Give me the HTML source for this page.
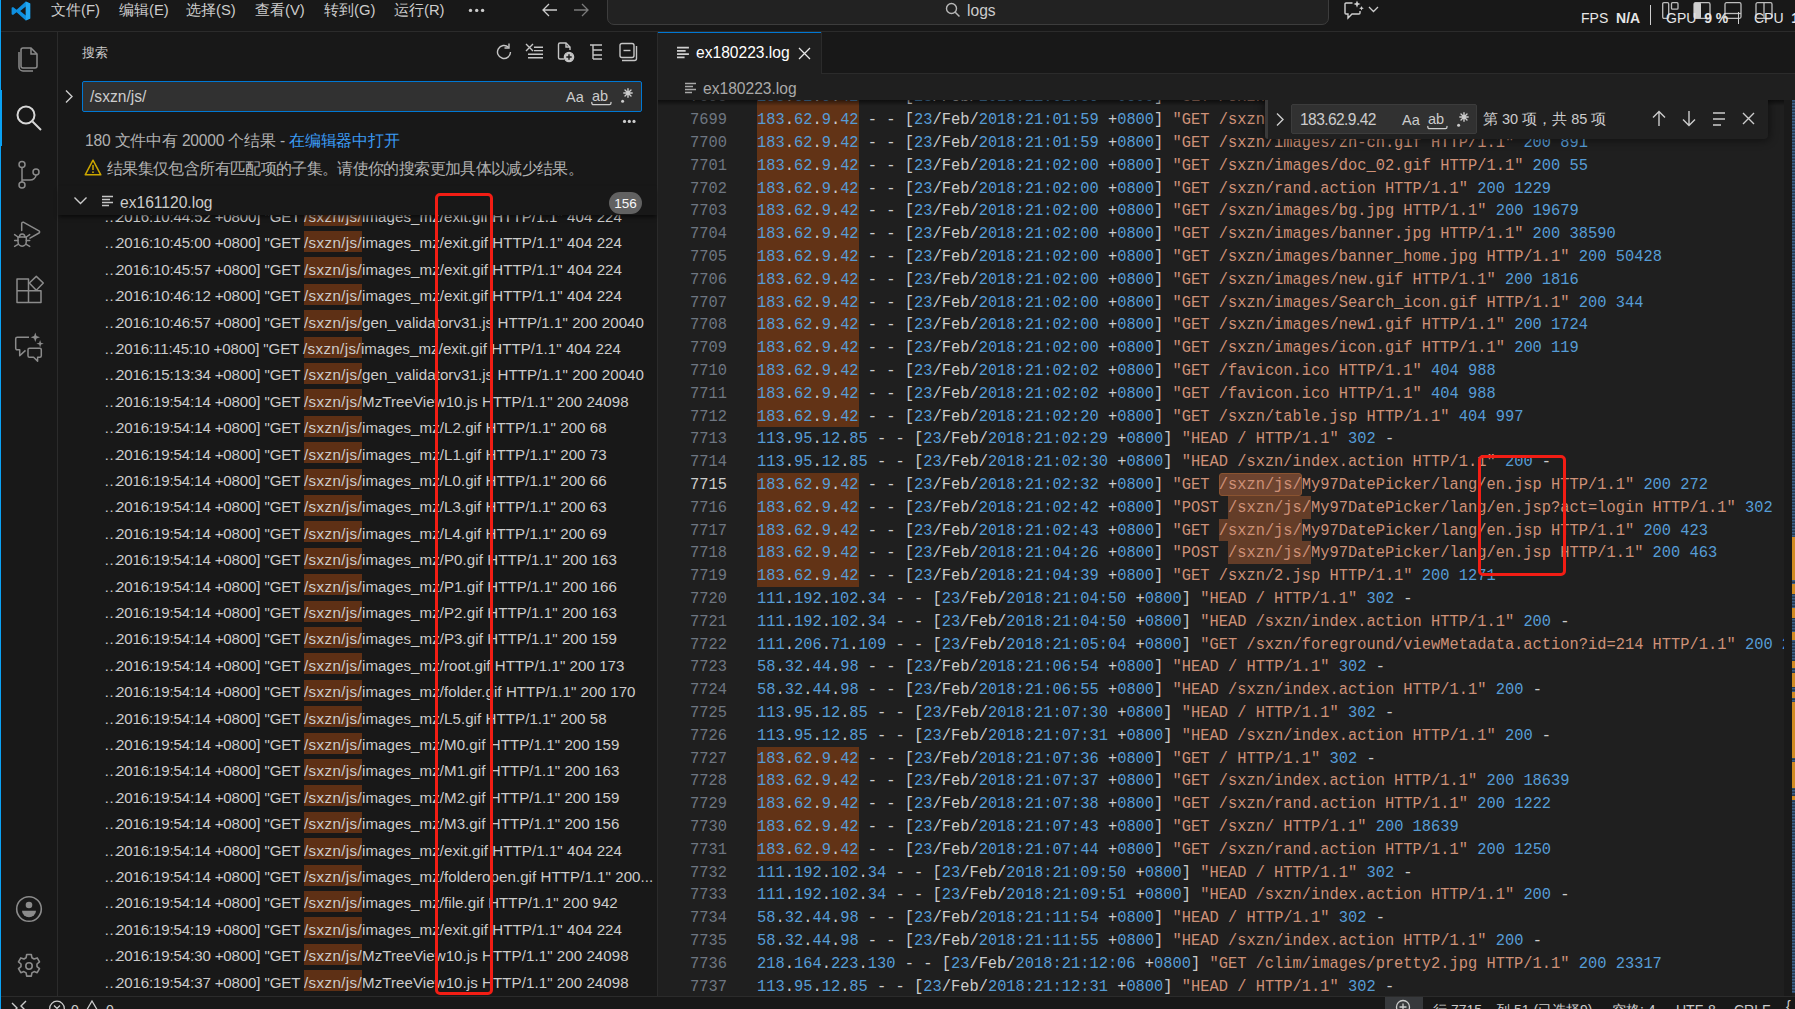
<!DOCTYPE html>
<html><head><meta charset="utf-8"><title>VS Code</title>
<style>
*{margin:0;padding:0;box-sizing:border-box}
html,body{width:1795px;height:1009px;overflow:hidden;background:#181818}
body{position:relative;font-family:"Liberation Sans",sans-serif;color:#cccccc;font-size:15.6px}
.a{position:absolute}
svg{position:absolute;overflow:visible}
.bd{position:absolute;background:#2b2b2b}
/* title */
.menu{position:absolute;top:0;height:21px;line-height:21px;font-size:14.8px;color:#cccccc;white-space:pre}
/* editor */
#ed{position:absolute;left:658px;top:100px;width:1137px;height:896px;background:#1f1f1f;overflow:hidden}
.row{position:absolute;left:0;height:22.8px;line-height:22.8px;font-family:"Liberation Mono",monospace;font-size:16.8px;white-space:pre;width:1137px}
.ln{position:absolute;top:1px;left:0;width:75.3px;text-align:right;color:#6e7681;transform:scaleX(0.9167);transform-origin:0 0}
.ln.act{color:#cccccc}
.tx{position:absolute;top:1px;left:99px;color:#cccccc;transform:scaleX(0.9167);transform-origin:0 0}
.tx b{font-weight:normal;color:#569cd6}
.tx i{font-style:normal;color:#ce9178}
.hip{position:absolute;left:99px;width:101.5px;height:22.8px;background:#623316}
.hjs{position:absolute;height:22.8px;background:#643d28}
.hsel{position:absolute;height:22.8px;background:#6e4430;border:1px solid #8a5330;border-radius:3px}
/* sidebar */
.sr{position:absolute;left:104px;height:26.4px;line-height:26.4px;font-size:15.1px;white-space:pre;color:#cccccc;width:553px;overflow:hidden}
.sr .e{letter-spacing:-3.05px}
.sr .p{letter-spacing:-0.147px}
.sr .m{letter-spacing:0.39px}
.shl{position:absolute;left:304px;width:58px;height:21px;background:#5e3015}
.sr .r{letter-spacing:0.057px}
.rbox{position:absolute;border:3.5px solid #f21d14;border-radius:5px}
</style></head><body>

<!-- left window edge -->
<div class="a" style="left:0;top:0;width:1.3px;height:1009px;background:#0aa2f5"></div>

<!-- ===== TITLE BAR ===== -->
<div class="bd" style="left:1px;top:31px;width:1794px;height:1px"></div>
<svg style="left:11px;top:1px" width="20" height="20" viewBox="0 0 100 100">
  <path d="M74 2 L96 13 V87 L74 98 L28 56 L10 70 L3 66 V34 L10 30 L28 44 Z M74 28 L46 50 L74 72 Z" fill="#0e8fe0" fill-rule="evenodd"/>
  <path d="M74 2 L96 13 V87 L74 98 Z" fill="#22a7f0"/>
</svg>
<div class="menu" style="left:51px">文件(F)</div>
<div class="menu" style="left:119px">编辑(E)</div>
<div class="menu" style="left:186px">选择(S)</div>
<div class="menu" style="left:255px">查看(V)</div>
<div class="menu" style="left:324px">转到(G)</div>
<div class="menu" style="left:394px">运行(R)</div>
<svg style="left:468px;top:8px" width="17" height="5" viewBox="0 0 17 5"><g fill="#cccccc"><circle cx="2.5" cy="2.4" r="1.7"/><circle cx="8.7" cy="2.4" r="1.7"/><circle cx="14.6" cy="2.4" r="1.7"/></g></svg>
<!-- nav arrows -->
<svg style="left:542px;top:3px" width="16" height="14" viewBox="0 0 16 14"><path d="M15 7H1.5M7 1L1 7l6 6" stroke="#cccccc" stroke-width="1.3" fill="none"/></svg>
<svg style="left:573px;top:3px" width="16" height="14" viewBox="0 0 16 14"><path d="M1 7h13.5M9 1l6 6-6 6" stroke="#7a7a7a" stroke-width="1.3" fill="none"/></svg>
<!-- command center -->
<div class="a" style="left:607px;top:-8px;width:722px;height:33px;background:#222222;border:1px solid #3d3d3d;border-radius:7px"></div>
<svg style="left:945px;top:2px" width="16" height="16" viewBox="0 0 16 16"><circle cx="6.5" cy="6.5" r="5" stroke="#b8b8b8" stroke-width="1.4" fill="none"/><path d="M10.2 10.2L14.5 14.5" stroke="#b8b8b8" stroke-width="1.5"/></svg>
<div class="menu" style="left:967px;top:0px;font-size:15.6px">logs</div>
<!-- copilot -->
<svg style="left:1343px;top:0px" width="22" height="20" viewBox="0 0 22 20">
 <path d="M9.5 3H3a1 1 0 0 0-1 1v9a1 1 0 0 0 1 1h2v4l4-4h7a1 1 0 0 0 1-1V11" stroke="#d0d0d0" stroke-width="1.4" fill="none"/>
 <path d="M14 0.5l1 2.6 2.6 1-2.6 1-1 2.6-1-2.6-2.6-1 2.6-1z M18.5 6l0.7 1.6 1.6 0.7-1.6 0.7-0.7 1.6-0.7-1.6-1.6-0.7 1.6-0.7z" fill="#d0d0d0"/>
</svg>
<svg style="left:1368px;top:6px" width="11" height="7" viewBox="0 0 11 7"><path d="M1 1l4.5 4.5L10 1" stroke="#cccccc" stroke-width="1.3" fill="none"/></svg>
<!-- layout icons -->
<svg style="left:1662px;top:2px" width="112" height="17" viewBox="0 0 112 17">
  <g stroke="#bdbdbd" stroke-width="1.3" fill="none">
   <rect x="0.7" y="0.7" width="6" height="15.6" rx="1.2"/><rect x="9.5" y="0.7" width="6.5" height="6.5" rx="1"/>
   <rect x="32" y="0.7" width="16" height="15.6" rx="1.5"/>
   <rect x="63" y="0.7" width="16" height="15.6" rx="1.5"/><path d="M63 11.5h16"/>
   <rect x="94" y="0.7" width="16" height="15.6" rx="1.5"/><path d="M102 1v15"/>
  </g>
  <rect x="32" y="0.7" width="7" height="15.6" fill="#cfcfcf" rx="1"/>
</svg>
<!-- FPS overlay -->
<div class="a" style="left:1581px;top:9px;font-size:14px;line-height:18px;color:#e6e6e6;white-space:pre">FPS  <b>N/A</b></div>
<div class="a" style="left:1650px;top:5px;width:1px;height:20px;background:#cfcfcf"></div>
<div class="a" style="left:1666px;top:9px;font-size:14px;line-height:18px;color:#e6e6e6;white-space:pre">GPU  <b>9 %</b></div>
<div class="a" style="left:1738px;top:12px;width:1px;height:12px;background:#cfcfcf"></div>
<div class="a" style="left:1754px;top:9px;font-size:14px;line-height:18px;color:#e6e6e6;white-space:pre">CPU  <b>1</b></div>

<!-- ===== ACTIVITY BAR ===== -->
<div class="bd" style="left:57px;top:32px;width:1px;height:964px"></div>
<div class="a" style="left:0;top:90px;width:2px;height:56px;background:#0aa2f5"></div>
<!-- explorer -->
<svg style="left:16px;top:46px" width="24" height="26" viewBox="0 0 24 26"><g stroke="#8b8b8b" stroke-width="1.5" fill="none"><path d="M7 2h8l6 6v12a2 2 0 0 1-2 2H7a2 2 0 0 1-2-2V4a2 2 0 0 1 2-2z"/><path d="M15 2v6h6"/><path d="M3 6v15a4 4 0 0 0 4 4h10"/></g></svg>
<!-- search -->
<svg style="left:15px;top:104px" width="28" height="28" viewBox="0 0 28 28"><g stroke="#d7d7d7" stroke-width="2" fill="none"><circle cx="11" cy="11" r="8.5"/><path d="M17.5 17.5L26 26"/></g></svg>
<!-- scm -->
<svg style="left:16px;top:160px" width="26" height="30" viewBox="0 0 26 30"><g stroke="#8b8b8b" stroke-width="1.5" fill="none"><circle cx="6" cy="4.5" r="3"/><circle cx="6" cy="25" r="3"/><circle cx="20" cy="12" r="3"/><path d="M6 7.5v14.5M20 15c0 3-3 5-6 5H6"/></g></svg>
<!-- run debug -->
<svg style="left:12px;top:218px" width="32" height="32" viewBox="0 0 32 32"><g stroke="#8b8b8b" stroke-width="1.5" fill="none" stroke-linejoin="round" stroke-linecap="round"><path d="M9.7 12.4V5.6a1.4 1.4 0 0 1 2-1.3L27 12.9a1.2 1.2 0 0 1 0 2.1L18 20.2"/><path d="M6 19h8.3v4.6a4.15 4.6 0 0 1-8.3 0z"/><path d="M7.5 19a2.65 2.9 0 0 1 5.3 0"/><path d="M2.6 16.6L6 19M2.6 22.6H6M2.6 28.4L6 26.4M17.7 16.6L14.3 19M17.7 22.6H14.3M17.7 28.4L14.3 26.4"/></g></svg>
<!-- extensions -->
<svg style="left:14px;top:274px" width="32" height="32" viewBox="0 0 32 32"><g stroke="#8b8b8b" stroke-width="1.5" fill="none" stroke-linejoin="round"><path d="M3 5h11.5v23.5H3z M3 16.8h24v11.7H14.5"/><path d="M22.3 2.4l7 6.6-7 7.2-7-7.2z"/></g></svg>
<!-- chat -->
<svg style="left:13px;top:334px" width="32" height="30" viewBox="0 0 32 30"><g stroke="#8b8b8b" stroke-width="1.5" fill="none" stroke-linejoin="round"><path d="M16 3.3H4.2a1.5 1.5 0 0 0-1.5 1.5v9.5a1.5 1.5 0 0 0 1.5 1.5h2.5v6l5.8-5.4"/><path d="M16.5 14.3h10.3a1.5 1.5 0 0 1 1.5 1.5v6a1.5 1.5 0 0 1-1.5 1.5h-2.2v4l-4-4h-4.1a1.5 1.5 0 0 1-1.5-1.5v-6a1.5 1.5 0 0 1 1.5-1.5z"/></g><path d="M22.3 -1.5l1.2 3.5 3.5 1.2-3.5 1.2-1.2 3.5-1.2-3.5-3.5-1.2 3.5-1.2z M27.1 6l0.9 2.8 2.8 0.9-2.8 0.9-0.9 2.8-0.9-2.8-2.8-0.9 2.8-0.9z" fill="#8b8b8b"/></svg>
<!-- account -->
<svg style="left:15px;top:895px" width="28" height="28" viewBox="0 0 28 28"><circle cx="14" cy="14" r="12.3" stroke="#8b8b8b" stroke-width="1.6" fill="none"/><circle cx="14" cy="10" r="3.3" fill="#8b8b8b"/><path d="M7 15.8h14a6.5 6 0 0 1-14 0z" fill="#8b8b8b"/></svg>
<!-- settings -->
<svg style="left:16px;top:953px" width="26" height="26" viewBox="0 0 26 26"><g stroke="#8b8b8b" stroke-width="1.6" fill="none" stroke-linejoin="round"><circle cx="13" cy="13" r="3.2"/><path d="M10.7 1.5h4.6l.6 3.2 2.2 1.3 3.1-1.1 2.3 4-2.5 2.1v2.6l2.5 2.1-2.3 4-3.1-1.1-2.2 1.3-.6 3.2h-4.6l-.6-3.2-2.2-1.3-3.1 1.1-2.3-4 2.5-2.1v-2.6L2.5 8.9l2.3-4 3.1 1.1 2.2-1.3z"/></g></svg>

<!-- ===== SIDEBAR ===== -->
<div class="bd" style="left:657px;top:32px;width:1px;height:964px"></div>
<div class="a" style="left:82px;top:44px;font-size:13px;line-height:18px;color:#cccccc">搜索</div>
<!-- toolbar icons -->
<svg style="left:494px;top:42px" width="145" height="20" viewBox="0 0 145 20">
 <g stroke="#c5c5c5" stroke-width="1.4" fill="none">
  <path d="M16.5 10a6.5 6.5 0 1 1-2-4.7"/><path d="M15 1.5v4.5h-4.5"/>
  <path d="M32 2l7 7M39 2l-7 7M40 5.2h9M40 8.6h9M34 12.3h15M34 15.7h15"/>
  <path d="M70 17h-4a1.5 1.5 0 0 1-1.5-1.5v-13A1.5 1.5 0 0 1 66 1h6l4 4v3"/><path d="M72 1v4h4"/>
  <circle cx="75" cy="15" r="4.6" fill="#c5c5c5"/><path d="M75 12.3v5.4M72.3 15h5.4" stroke="#181818"/>
  <path d="M96 3h12M99 3v14M99 8h9M99 13h9M99 17h9"/>
  <rect x="126" y="1.5" width="14" height="14" rx="2"/><path d="M129.5 8.5h7"/><path d="M128 18.5h12.5a2 2 0 0 0 2-2V4"/>
 </g>
</svg>
<svg style="left:64px;top:89px" width="10" height="15" viewBox="0 0 10 15"><path d="M2 1.5l6 6-6 6" stroke="#cccccc" stroke-width="1.4" fill="none"/></svg>
<div class="a" style="left:82px;top:81px;width:560px;height:31px;background:#313131;border:1px solid #0078d4;border-radius:2px"></div>
<div class="a" style="left:90px;top:86px;font-size:15.6px;line-height:21px;color:#cccccc">/sxzn/js/</div>
<div class="a" style="left:566px;top:87px;font-size:14.5px;line-height:20px;color:#cccccc">Aa</div>
<div class="a" style="left:592px;top:86px;font-size:14.5px;line-height:20px;color:#cccccc">ab</div>
<svg style="left:591px;top:102px" width="45" height="20" viewBox="0 0 45 20"><g stroke="#cccccc" stroke-width="1.3" fill="none" stroke-linecap="round"><path d="M0.8 0.3v0.8a1.6 1.6 0 0 0 1.6 1.6h16a1.6 1.6 0 0 0 1.6-1.6V0.3"/><path d="M37 -13.2v8.4M32.8 -9h8.4M34 -12l6 6M40 -12l-6 6" stroke-width="1.4"/></g><circle cx="31.6" cy="-0.7" r="1.5" fill="#cccccc"/></svg>
<svg style="left:622px;top:119px" width="15" height="5" viewBox="0 0 15 5"><g fill="#cccccc"><circle cx="2.5" cy="2.4" r="1.6"/><circle cx="7.3" cy="2.4" r="1.6"/><circle cx="12" cy="2.4" r="1.6"/></g></svg>
<div class="a" style="left:85px;top:130px;font-size:15.6px;line-height:21px;color:#b0b0b0;white-space:pre;letter-spacing:-0.2px">180 文件中有 20000 个结果 - <span style="color:#3b9cf5">在编辑器中打开</span></div>
<svg style="left:84px;top:159px" width="18" height="17" viewBox="0 0 18 17"><path d="M9 1.2L16.8 15.8H1.2z" stroke="#cca700" stroke-width="1.5" fill="none" stroke-linejoin="round"/><path d="M9 6v5" stroke="#cca700" stroke-width="1.5"/><circle cx="9" cy="13.2" r="0.9" fill="#cca700"/></svg>
<div class="a" style="left:107px;top:158px;font-size:15.6px;line-height:21px;color:#b0b0b0;white-space:pre;letter-spacing:-0.64px">结果集仅包含所有匹配项的子集。请使你的搜索更加具体以减少结果。</div>

<!-- search result rows -->
<div class="a" style="left:58px;top:186px;width:599px;height:810px;overflow:hidden">
 <div style="position:absolute;left:-58px;top:-186px;width:657px;height:1009px">
<div class="shl" style="top:204.60px"></div>
<div class="sr" style="top:204.00px"><span class="e">…</span><span class="p">2016:10:44:52 +0800] "GET </span><span class="m">/sxzn/js/</span><span class="r">images_mz/exit.gif HTTP/1.1&quot; 404 224</span></div>
<div class="shl" style="top:231.00px"></div>
<div class="sr" style="top:230.40px"><span class="e">…</span><span class="p">2016:10:45:00 +0800] "GET </span><span class="m">/sxzn/js/</span><span class="r">images_mz/exit.gif HTTP/1.1&quot; 404 224</span></div>
<div class="shl" style="top:257.40px"></div>
<div class="sr" style="top:256.80px"><span class="e">…</span><span class="p">2016:10:45:57 +0800] "GET </span><span class="m">/sxzn/js/</span><span class="r">images_mz/exit.gif HTTP/1.1&quot; 404 224</span></div>
<div class="shl" style="top:283.80px"></div>
<div class="sr" style="top:283.20px"><span class="e">…</span><span class="p">2016:10:46:12 +0800] "GET </span><span class="m">/sxzn/js/</span><span class="r">images_mz/exit.gif HTTP/1.1&quot; 404 224</span></div>
<div class="shl" style="top:310.20px"></div>
<div class="sr" style="top:309.60px"><span class="e">…</span><span class="p">2016:10:46:57 +0800] "GET </span><span class="m">/sxzn/js/</span><span class="r">gen_validatorv31.js HTTP/1.1&quot; 200 20040</span></div>
<div class="shl" style="top:336.60px"></div>
<div class="sr" style="top:336.00px"><span class="e">…</span><span class="p">2016:11:45:10 +0800] "GET </span><span class="m">/sxzn/js/</span><span class="r">images_mz/exit.gif HTTP/1.1&quot; 404 224</span></div>
<div class="shl" style="top:363.00px"></div>
<div class="sr" style="top:362.40px"><span class="e">…</span><span class="p">2016:15:13:34 +0800] "GET </span><span class="m">/sxzn/js/</span><span class="r">gen_validatorv31.js HTTP/1.1&quot; 200 20040</span></div>
<div class="shl" style="top:389.40px"></div>
<div class="sr" style="top:388.80px"><span class="e">…</span><span class="p">2016:19:54:14 +0800] "GET </span><span class="m">/sxzn/js/</span><span class="r">MzTreeView10.js HTTP/1.1&quot; 200 24098</span></div>
<div class="shl" style="top:415.80px"></div>
<div class="sr" style="top:415.20px"><span class="e">…</span><span class="p">2016:19:54:14 +0800] "GET </span><span class="m">/sxzn/js/</span><span class="r">images_mz/L2.gif HTTP/1.1&quot; 200 68</span></div>
<div class="shl" style="top:442.20px"></div>
<div class="sr" style="top:441.60px"><span class="e">…</span><span class="p">2016:19:54:14 +0800] "GET </span><span class="m">/sxzn/js/</span><span class="r">images_mz/L1.gif HTTP/1.1&quot; 200 73</span></div>
<div class="shl" style="top:468.60px"></div>
<div class="sr" style="top:468.00px"><span class="e">…</span><span class="p">2016:19:54:14 +0800] "GET </span><span class="m">/sxzn/js/</span><span class="r">images_mz/L0.gif HTTP/1.1&quot; 200 66</span></div>
<div class="shl" style="top:495.00px"></div>
<div class="sr" style="top:494.40px"><span class="e">…</span><span class="p">2016:19:54:14 +0800] "GET </span><span class="m">/sxzn/js/</span><span class="r">images_mz/L3.gif HTTP/1.1&quot; 200 63</span></div>
<div class="shl" style="top:521.40px"></div>
<div class="sr" style="top:520.80px"><span class="e">…</span><span class="p">2016:19:54:14 +0800] "GET </span><span class="m">/sxzn/js/</span><span class="r">images_mz/L4.gif HTTP/1.1&quot; 200 69</span></div>
<div class="shl" style="top:547.80px"></div>
<div class="sr" style="top:547.20px"><span class="e">…</span><span class="p">2016:19:54:14 +0800] "GET </span><span class="m">/sxzn/js/</span><span class="r">images_mz/P0.gif HTTP/1.1&quot; 200 163</span></div>
<div class="shl" style="top:574.20px"></div>
<div class="sr" style="top:573.60px"><span class="e">…</span><span class="p">2016:19:54:14 +0800] "GET </span><span class="m">/sxzn/js/</span><span class="r">images_mz/P1.gif HTTP/1.1&quot; 200 166</span></div>
<div class="shl" style="top:600.60px"></div>
<div class="sr" style="top:600.00px"><span class="e">…</span><span class="p">2016:19:54:14 +0800] "GET </span><span class="m">/sxzn/js/</span><span class="r">images_mz/P2.gif HTTP/1.1&quot; 200 163</span></div>
<div class="shl" style="top:627.00px"></div>
<div class="sr" style="top:626.40px"><span class="e">…</span><span class="p">2016:19:54:14 +0800] "GET </span><span class="m">/sxzn/js/</span><span class="r">images_mz/P3.gif HTTP/1.1&quot; 200 159</span></div>
<div class="shl" style="top:653.40px"></div>
<div class="sr" style="top:652.80px"><span class="e">…</span><span class="p">2016:19:54:14 +0800] "GET </span><span class="m">/sxzn/js/</span><span class="r">images_mz/root.gif HTTP/1.1&quot; 200 173</span></div>
<div class="shl" style="top:679.80px"></div>
<div class="sr" style="top:679.20px"><span class="e">…</span><span class="p">2016:19:54:14 +0800] "GET </span><span class="m">/sxzn/js/</span><span class="r">images_mz/folder.gif HTTP/1.1&quot; 200 170</span></div>
<div class="shl" style="top:706.20px"></div>
<div class="sr" style="top:705.60px"><span class="e">…</span><span class="p">2016:19:54:14 +0800] "GET </span><span class="m">/sxzn/js/</span><span class="r">images_mz/L5.gif HTTP/1.1&quot; 200 58</span></div>
<div class="shl" style="top:732.60px"></div>
<div class="sr" style="top:732.00px"><span class="e">…</span><span class="p">2016:19:54:14 +0800] "GET </span><span class="m">/sxzn/js/</span><span class="r">images_mz/M0.gif HTTP/1.1&quot; 200 159</span></div>
<div class="shl" style="top:759.00px"></div>
<div class="sr" style="top:758.40px"><span class="e">…</span><span class="p">2016:19:54:14 +0800] "GET </span><span class="m">/sxzn/js/</span><span class="r">images_mz/M1.gif HTTP/1.1&quot; 200 163</span></div>
<div class="shl" style="top:785.40px"></div>
<div class="sr" style="top:784.80px"><span class="e">…</span><span class="p">2016:19:54:14 +0800] "GET </span><span class="m">/sxzn/js/</span><span class="r">images_mz/M2.gif HTTP/1.1&quot; 200 159</span></div>
<div class="shl" style="top:811.80px"></div>
<div class="sr" style="top:811.20px"><span class="e">…</span><span class="p">2016:19:54:14 +0800] "GET </span><span class="m">/sxzn/js/</span><span class="r">images_mz/M3.gif HTTP/1.1&quot; 200 156</span></div>
<div class="shl" style="top:838.20px"></div>
<div class="sr" style="top:837.60px"><span class="e">…</span><span class="p">2016:19:54:14 +0800] "GET </span><span class="m">/sxzn/js/</span><span class="r">images_mz/exit.gif HTTP/1.1&quot; 404 224</span></div>
<div class="shl" style="top:864.60px"></div>
<div class="sr" style="top:864.00px"><span class="e">…</span><span class="p">2016:19:54:14 +0800] "GET </span><span class="m">/sxzn/js/</span><span class="r">images_mz/folderopen.gif HTTP/1.1&quot; 200...</span></div>
<div class="shl" style="top:891.00px"></div>
<div class="sr" style="top:890.40px"><span class="e">…</span><span class="p">2016:19:54:14 +0800] "GET </span><span class="m">/sxzn/js/</span><span class="r">images_mz/file.gif HTTP/1.1&quot; 200 942</span></div>
<div class="shl" style="top:917.40px"></div>
<div class="sr" style="top:916.80px"><span class="e">…</span><span class="p">2016:19:54:19 +0800] "GET </span><span class="m">/sxzn/js/</span><span class="r">images_mz/exit.gif HTTP/1.1&quot; 404 224</span></div>
<div class="shl" style="top:943.80px"></div>
<div class="sr" style="top:943.20px"><span class="e">…</span><span class="p">2016:19:54:30 +0800] "GET </span><span class="m">/sxzn/js/</span><span class="r">MzTreeView10.js HTTP/1.1&quot; 200 24098</span></div>
<div class="shl" style="top:970.20px"></div>
<div class="sr" style="top:969.60px"><span class="e">…</span><span class="p">2016:19:54:37 +0800] "GET </span><span class="m">/sxzn/js/</span><span class="r">MzTreeView10.js HTTP/1.1&quot; 200 24098</span></div>
 </div>
</div>
<!-- sticky file header -->
<div class="a" style="left:58px;top:186px;width:599px;height:29px;background:#181818;box-shadow:0 3px 4px -1px rgba(0,0,0,0.6)"></div>
<svg style="left:73px;top:196px" width="15" height="9" viewBox="0 0 15 9"><path d="M1.5 1.5l6 6 6-6" stroke="#cccccc" stroke-width="1.4" fill="none"/></svg>
<svg style="left:102px;top:195px" width="12" height="12" viewBox="0 0 12 12"><g stroke="#c5c5c5" stroke-width="1.6"><path d="M0 1.5h11M0 4.5h8M0 7.5h11M0 10.5h7"/></g></svg>
<div class="a" style="left:120px;top:192px;font-size:15.6px;line-height:21px;color:#cccccc">ex161120.log</div>
<div class="a" style="left:609px;top:192px;width:33px;height:22px;background:#616161;border-radius:11px;color:#f8f8f8;font-size:13.5px;line-height:24px;text-align:center">156</div>

<!-- ===== EDITOR GROUP ===== -->
<!-- tabs -->
<div class="bd" style="left:821px;top:73px;width:974px;height:1px"></div>
<div class="a" style="left:658px;top:32px;width:163px;height:42px;background:#1f1f1f"></div>
<div class="a" style="left:658px;top:32px;width:163px;height:1.3px;background:#0078d4"></div>
<div class="bd" style="left:821px;top:32px;width:1px;height:42px"></div>
<svg style="left:677px;top:46px" width="13" height="13" viewBox="0 0 12 12"><g stroke="#d0d0d0" stroke-width="1.6"><path d="M0 1.5h11M0 4.5h8M0 7.5h11M0 10.5h7"/></g></svg>
<div class="a" style="left:696px;top:42px;font-size:15.6px;line-height:21px;color:#ffffff">ex180223.log</div>
<svg style="left:798px;top:46.5px" width="13" height="13" viewBox="0 0 13 13"><path d="M1 1l11 11M12 1L1 12" stroke="#e8e8e8" stroke-width="1.3"/></svg>
<!-- breadcrumbs -->
<div class="a" style="left:658px;top:74px;width:1137px;height:26px;background:#1f1f1f"></div>
<svg style="left:685px;top:82px" width="12" height="12" viewBox="0 0 12 12"><g stroke="#a9a9a9" stroke-width="1.6"><path d="M0 1.5h11M0 4.5h8M0 7.5h11M0 10.5h7"/></g></svg>
<div class="a" style="left:703px;top:78px;font-size:15.6px;line-height:21px;color:#a9a9a9">ex180223.log</div>

<div id="ed">
<div class="hip" style="top:-14.60px"></div>
<div class="hip" style="top:8.20px"></div>
<div class="hip" style="top:31.00px"></div>
<div class="hip" style="top:53.80px"></div>
<div class="hip" style="top:76.60px"></div>
<div class="hip" style="top:99.40px"></div>
<div class="hip" style="top:122.20px"></div>
<div class="hip" style="top:145.00px"></div>
<div class="hip" style="top:167.80px"></div>
<div class="hip" style="top:190.60px"></div>
<div class="hip" style="top:213.40px"></div>
<div class="hip" style="top:236.20px"></div>
<div class="hip" style="top:259.00px"></div>
<div class="hip" style="top:281.80px"></div>
<div class="hip" style="top:304.60px"></div>
<div class="hip" style="top:373.00px"></div>
<div class="hsel" style="top:373.00px;left:561.00px;width:83.16px"></div>
<div class="hip" style="top:395.80px"></div>
<div class="hjs" style="top:395.80px;left:570.24px;width:83.16px"></div>
<div class="hip" style="top:418.60px"></div>
<div class="hjs" style="top:418.60px;left:561.00px;width:83.16px"></div>
<div class="hip" style="top:441.40px"></div>
<div class="hjs" style="top:441.40px;left:570.24px;width:83.16px"></div>
<div class="hip" style="top:464.20px"></div>
<div class="hip" style="top:646.60px"></div>
<div class="hip" style="top:669.40px"></div>
<div class="hip" style="top:692.20px"></div>
<div class="hip" style="top:715.00px"></div>
<div class="hip" style="top:737.80px"></div>
<div class="row" style="top:-14.60px"><span class="ln">7698</span><span class="tx"><b>183</b>.<b>62</b>.<b>9</b>.<b>42</b> - - [<b>23</b>/Feb/<b>2018:21:01:59</b> +<b>0800</b>] <i>&quot;GET /sxzn/images/zh-cn.gif HTTP/1.1&quot;</i> <b>200</b> <b>891</b></span></div>
<div class="row" style="top:8.20px"><span class="ln">7699</span><span class="tx"><b>183</b>.<b>62</b>.<b>9</b>.<b>42</b> - - [<b>23</b>/Feb/<b>2018:21:01:59</b> +<b>0800</b>] <i>&quot;GET /sxzn/images/zh-cn.gif HTTP/1.1&quot;</i> <b>200</b> <b>891</b></span></div>
<div class="row" style="top:31.00px"><span class="ln">7700</span><span class="tx"><b>183</b>.<b>62</b>.<b>9</b>.<b>42</b> - - [<b>23</b>/Feb/<b>2018:21:01:59</b> +<b>0800</b>] <i>&quot;GET /sxzn/images/zh-cn.gif HTTP/1.1&quot;</i> <b>200</b> <b>891</b></span></div>
<div class="row" style="top:53.80px"><span class="ln">7701</span><span class="tx"><b>183</b>.<b>62</b>.<b>9</b>.<b>42</b> - - [<b>23</b>/Feb/<b>2018:21:02:00</b> +<b>0800</b>] <i>&quot;GET /sxzn/images/doc_02.gif HTTP/1.1&quot;</i> <b>200</b> <b>55</b></span></div>
<div class="row" style="top:76.60px"><span class="ln">7702</span><span class="tx"><b>183</b>.<b>62</b>.<b>9</b>.<b>42</b> - - [<b>23</b>/Feb/<b>2018:21:02:00</b> +<b>0800</b>] <i>&quot;GET /sxzn/rand.action HTTP/1.1&quot;</i> <b>200</b> <b>1229</b></span></div>
<div class="row" style="top:99.40px"><span class="ln">7703</span><span class="tx"><b>183</b>.<b>62</b>.<b>9</b>.<b>42</b> - - [<b>23</b>/Feb/<b>2018:21:02:00</b> +<b>0800</b>] <i>&quot;GET /sxzn/images/bg.jpg HTTP/1.1&quot;</i> <b>200</b> <b>19679</b></span></div>
<div class="row" style="top:122.20px"><span class="ln">7704</span><span class="tx"><b>183</b>.<b>62</b>.<b>9</b>.<b>42</b> - - [<b>23</b>/Feb/<b>2018:21:02:00</b> +<b>0800</b>] <i>&quot;GET /sxzn/images/banner.jpg HTTP/1.1&quot;</i> <b>200</b> <b>38590</b></span></div>
<div class="row" style="top:145.00px"><span class="ln">7705</span><span class="tx"><b>183</b>.<b>62</b>.<b>9</b>.<b>42</b> - - [<b>23</b>/Feb/<b>2018:21:02:00</b> +<b>0800</b>] <i>&quot;GET /sxzn/images/banner_home.jpg HTTP/1.1&quot;</i> <b>200</b> <b>50428</b></span></div>
<div class="row" style="top:167.80px"><span class="ln">7706</span><span class="tx"><b>183</b>.<b>62</b>.<b>9</b>.<b>42</b> - - [<b>23</b>/Feb/<b>2018:21:02:00</b> +<b>0800</b>] <i>&quot;GET /sxzn/images/new.gif HTTP/1.1&quot;</i> <b>200</b> <b>1816</b></span></div>
<div class="row" style="top:190.60px"><span class="ln">7707</span><span class="tx"><b>183</b>.<b>62</b>.<b>9</b>.<b>42</b> - - [<b>23</b>/Feb/<b>2018:21:02:00</b> +<b>0800</b>] <i>&quot;GET /sxzn/images/Search_icon.gif HTTP/1.1&quot;</i> <b>200</b> <b>344</b></span></div>
<div class="row" style="top:213.40px"><span class="ln">7708</span><span class="tx"><b>183</b>.<b>62</b>.<b>9</b>.<b>42</b> - - [<b>23</b>/Feb/<b>2018:21:02:00</b> +<b>0800</b>] <i>&quot;GET /sxzn/images/new1.gif HTTP/1.1&quot;</i> <b>200</b> <b>1724</b></span></div>
<div class="row" style="top:236.20px"><span class="ln">7709</span><span class="tx"><b>183</b>.<b>62</b>.<b>9</b>.<b>42</b> - - [<b>23</b>/Feb/<b>2018:21:02:00</b> +<b>0800</b>] <i>&quot;GET /sxzn/images/icon.gif HTTP/1.1&quot;</i> <b>200</b> <b>119</b></span></div>
<div class="row" style="top:259.00px"><span class="ln">7710</span><span class="tx"><b>183</b>.<b>62</b>.<b>9</b>.<b>42</b> - - [<b>23</b>/Feb/<b>2018:21:02:02</b> +<b>0800</b>] <i>&quot;GET /favicon.ico HTTP/1.1&quot;</i> <b>404</b> <b>988</b></span></div>
<div class="row" style="top:281.80px"><span class="ln">7711</span><span class="tx"><b>183</b>.<b>62</b>.<b>9</b>.<b>42</b> - - [<b>23</b>/Feb/<b>2018:21:02:02</b> +<b>0800</b>] <i>&quot;GET /favicon.ico HTTP/1.1&quot;</i> <b>404</b> <b>988</b></span></div>
<div class="row" style="top:304.60px"><span class="ln">7712</span><span class="tx"><b>183</b>.<b>62</b>.<b>9</b>.<b>42</b> - - [<b>23</b>/Feb/<b>2018:21:02:20</b> +<b>0800</b>] <i>&quot;GET /sxzn/table.jsp HTTP/1.1&quot;</i> <b>404</b> <b>997</b></span></div>
<div class="row" style="top:327.40px"><span class="ln">7713</span><span class="tx"><b>113</b>.<b>95</b>.<b>12</b>.<b>85</b> - - [<b>23</b>/Feb/<b>2018:21:02:29</b> +<b>0800</b>] <i>&quot;HEAD / HTTP/1.1&quot;</i> <b>302</b> -</span></div>
<div class="row" style="top:350.20px"><span class="ln">7714</span><span class="tx"><b>113</b>.<b>95</b>.<b>12</b>.<b>85</b> - - [<b>23</b>/Feb/<b>2018:21:02:30</b> +<b>0800</b>] <i>&quot;HEAD /sxzn/index.action HTTP/1.1&quot;</i> <b>200</b> -</span></div>
<div class="row" style="top:373.00px"><span class="ln act">7715</span><span class="tx"><b>183</b>.<b>62</b>.<b>9</b>.<b>42</b> - - [<b>23</b>/Feb/<b>2018:21:02:32</b> +<b>0800</b>] <i>&quot;GET /sxzn/js/My97DatePicker/lang/en.jsp HTTP/1.1&quot;</i> <b>200</b> <b>272</b></span></div>
<div class="row" style="top:395.80px"><span class="ln">7716</span><span class="tx"><b>183</b>.<b>62</b>.<b>9</b>.<b>42</b> - - [<b>23</b>/Feb/<b>2018:21:02:42</b> +<b>0800</b>] <i>&quot;POST /sxzn/js/My97DatePicker/lang/en.jsp?act=login HTTP/1.1&quot;</i> <b>302</b></span></div>
<div class="row" style="top:418.60px"><span class="ln">7717</span><span class="tx"><b>183</b>.<b>62</b>.<b>9</b>.<b>42</b> - - [<b>23</b>/Feb/<b>2018:21:02:43</b> +<b>0800</b>] <i>&quot;GET /sxzn/js/My97DatePicker/lang/en.jsp HTTP/1.1&quot;</i> <b>200</b> <b>423</b></span></div>
<div class="row" style="top:441.40px"><span class="ln">7718</span><span class="tx"><b>183</b>.<b>62</b>.<b>9</b>.<b>42</b> - - [<b>23</b>/Feb/<b>2018:21:04:26</b> +<b>0800</b>] <i>&quot;POST /sxzn/js/My97DatePicker/lang/en.jsp HTTP/1.1&quot;</i> <b>200</b> <b>463</b></span></div>
<div class="row" style="top:464.20px"><span class="ln">7719</span><span class="tx"><b>183</b>.<b>62</b>.<b>9</b>.<b>42</b> - - [<b>23</b>/Feb/<b>2018:21:04:39</b> +<b>0800</b>] <i>&quot;GET /sxzn/2.jsp HTTP/1.1&quot;</i> <b>200</b> <b>1271</b></span></div>
<div class="row" style="top:487.00px"><span class="ln">7720</span><span class="tx"><b>111</b>.<b>192</b>.<b>102</b>.<b>34</b> - - [<b>23</b>/Feb/<b>2018:21:04:50</b> +<b>0800</b>] <i>&quot;HEAD / HTTP/1.1&quot;</i> <b>302</b> -</span></div>
<div class="row" style="top:509.80px"><span class="ln">7721</span><span class="tx"><b>111</b>.<b>192</b>.<b>102</b>.<b>34</b> - - [<b>23</b>/Feb/<b>2018:21:04:50</b> +<b>0800</b>] <i>&quot;HEAD /sxzn/index.action HTTP/1.1&quot;</i> <b>200</b> -</span></div>
<div class="row" style="top:532.60px"><span class="ln">7722</span><span class="tx"><b>111</b>.<b>206</b>.<b>71</b>.<b>109</b> - - [<b>23</b>/Feb/<b>2018:21:05:04</b> +<b>0800</b>] <i>&quot;GET /sxzn/foreground/viewMetadata.action?id=214 HTTP/1.1&quot;</i> <b>200</b> <b>2</b></span></div>
<div class="row" style="top:555.40px"><span class="ln">7723</span><span class="tx"><b>58</b>.<b>32</b>.<b>44</b>.<b>98</b> - - [<b>23</b>/Feb/<b>2018:21:06:54</b> +<b>0800</b>] <i>&quot;HEAD / HTTP/1.1&quot;</i> <b>302</b> -</span></div>
<div class="row" style="top:578.20px"><span class="ln">7724</span><span class="tx"><b>58</b>.<b>32</b>.<b>44</b>.<b>98</b> - - [<b>23</b>/Feb/<b>2018:21:06:55</b> +<b>0800</b>] <i>&quot;HEAD /sxzn/index.action HTTP/1.1&quot;</i> <b>200</b> -</span></div>
<div class="row" style="top:601.00px"><span class="ln">7725</span><span class="tx"><b>113</b>.<b>95</b>.<b>12</b>.<b>85</b> - - [<b>23</b>/Feb/<b>2018:21:07:30</b> +<b>0800</b>] <i>&quot;HEAD / HTTP/1.1&quot;</i> <b>302</b> -</span></div>
<div class="row" style="top:623.80px"><span class="ln">7726</span><span class="tx"><b>113</b>.<b>95</b>.<b>12</b>.<b>85</b> - - [<b>23</b>/Feb/<b>2018:21:07:31</b> +<b>0800</b>] <i>&quot;HEAD /sxzn/index.action HTTP/1.1&quot;</i> <b>200</b> -</span></div>
<div class="row" style="top:646.60px"><span class="ln">7727</span><span class="tx"><b>183</b>.<b>62</b>.<b>9</b>.<b>42</b> - - [<b>23</b>/Feb/<b>2018:21:07:36</b> +<b>0800</b>] <i>&quot;GET / HTTP/1.1&quot;</i> <b>302</b> -</span></div>
<div class="row" style="top:669.40px"><span class="ln">7728</span><span class="tx"><b>183</b>.<b>62</b>.<b>9</b>.<b>42</b> - - [<b>23</b>/Feb/<b>2018:21:07:37</b> +<b>0800</b>] <i>&quot;GET /sxzn/index.action HTTP/1.1&quot;</i> <b>200</b> <b>18639</b></span></div>
<div class="row" style="top:692.20px"><span class="ln">7729</span><span class="tx"><b>183</b>.<b>62</b>.<b>9</b>.<b>42</b> - - [<b>23</b>/Feb/<b>2018:21:07:38</b> +<b>0800</b>] <i>&quot;GET /sxzn/rand.action HTTP/1.1&quot;</i> <b>200</b> <b>1222</b></span></div>
<div class="row" style="top:715.00px"><span class="ln">7730</span><span class="tx"><b>183</b>.<b>62</b>.<b>9</b>.<b>42</b> - - [<b>23</b>/Feb/<b>2018:21:07:43</b> +<b>0800</b>] <i>&quot;GET /sxzn/ HTTP/1.1&quot;</i> <b>200</b> <b>18639</b></span></div>
<div class="row" style="top:737.80px"><span class="ln">7731</span><span class="tx"><b>183</b>.<b>62</b>.<b>9</b>.<b>42</b> - - [<b>23</b>/Feb/<b>2018:21:07:44</b> +<b>0800</b>] <i>&quot;GET /sxzn/rand.action HTTP/1.1&quot;</i> <b>200</b> <b>1250</b></span></div>
<div class="row" style="top:760.60px"><span class="ln">7732</span><span class="tx"><b>111</b>.<b>192</b>.<b>102</b>.<b>34</b> - - [<b>23</b>/Feb/<b>2018:21:09:50</b> +<b>0800</b>] <i>&quot;HEAD / HTTP/1.1&quot;</i> <b>302</b> -</span></div>
<div class="row" style="top:783.40px"><span class="ln">7733</span><span class="tx"><b>111</b>.<b>192</b>.<b>102</b>.<b>34</b> - - [<b>23</b>/Feb/<b>2018:21:09:51</b> +<b>0800</b>] <i>&quot;HEAD /sxzn/index.action HTTP/1.1&quot;</i> <b>200</b> -</span></div>
<div class="row" style="top:806.20px"><span class="ln">7734</span><span class="tx"><b>58</b>.<b>32</b>.<b>44</b>.<b>98</b> - - [<b>23</b>/Feb/<b>2018:21:11:54</b> +<b>0800</b>] <i>&quot;HEAD / HTTP/1.1&quot;</i> <b>302</b> -</span></div>
<div class="row" style="top:829.00px"><span class="ln">7735</span><span class="tx"><b>58</b>.<b>32</b>.<b>44</b>.<b>98</b> - - [<b>23</b>/Feb/<b>2018:21:11:55</b> +<b>0800</b>] <i>&quot;HEAD /sxzn/index.action HTTP/1.1&quot;</i> <b>200</b> -</span></div>
<div class="row" style="top:851.80px"><span class="ln">7736</span><span class="tx"><b>218</b>.<b>164</b>.<b>223</b>.<b>130</b> - - [<b>23</b>/Feb/<b>2018:21:12:06</b> +<b>0800</b>] <i>&quot;GET /clim/images/pretty2.jpg HTTP/1.1&quot;</i> <b>200</b> <b>23317</b></span></div>
<div class="row" style="top:874.60px"><span class="ln">7737</span><span class="tx"><b>113</b>.<b>95</b>.<b>12</b>.<b>85</b> - - [<b>23</b>/Feb/<b>2018:21:12:31</b> +<b>0800</b>] <i>&quot;HEAD / HTTP/1.1&quot;</i> <b>302</b> -</span></div>
</div>
<!-- scroll shadow -->
<div class="a" style="left:658px;top:100px;width:1126px;height:6px;background:linear-gradient(rgba(0,0,0,0.55),rgba(0,0,0,0))"></div>
<!-- minimap strip -->
<div class="a" style="left:1784px;top:100px;width:8px;height:896px;background:#1a1a1a"></div>
<div class="a" style="left:1792px;top:100px;width:3px;height:893px;background:repeating-linear-gradient(#3d6288 0 1px,#2f4c6a 1px 2px,#263a50 2px 3px)"></div>
<div class="a" style="left:1792px;top:537px;width:3px;height:43px;background:#d18b22"></div>
<div class="a" style="left:1792px;top:584px;width:3px;height:10px;background:#d18b22"></div>
<div class="a" style="left:1792px;top:608px;width:3px;height:10px;background:#d18b22"></div>
<div class="a" style="left:1792px;top:632px;width:3px;height:8px;background:#d18b22"></div>
<div class="a" style="left:1792px;top:661px;width:3px;height:7px;background:#d18b22"></div>
<div class="a" style="left:1792px;top:673px;width:3px;height:14px;background:#d18b22"></div>
<div class="a" style="left:1792px;top:692px;width:3px;height:6px;background:#d18b22"></div>
<div class="a" style="left:1792px;top:702px;width:3px;height:56px;background:#d18b22"></div>
<div class="a" style="left:1792px;top:762px;width:3px;height:26px;background:#d18b22"></div>
<div class="a" style="left:1792px;top:796px;width:3px;height:4px;background:#d18b22"></div>

<!-- find widget -->
<div class="a" style="left:1265px;top:100px;width:503px;height:39px;background:#202020;box-shadow:0 0 8px 2px rgba(0,0,0,0.45);border-radius:0 0 4px 4px;clip-path:inset(0 -14px -14px -14px)"></div>
<div class="a" style="left:1265px;top:100px;width:3px;height:39px;background:#3a3a3a;border-radius:0 0 0 3px"></div>
<svg style="left:1275px;top:112px" width="10" height="15" viewBox="0 0 10 15"><path d="M2 1.5l6 6-6 6" stroke="#cccccc" stroke-width="1.4" fill="none"/></svg>
<div class="a" style="left:1291px;top:104px;width:186px;height:30px;background:#313131;border:1px solid #3c3c3c;border-radius:2px"></div>
<div class="a" style="left:1300px;top:109px;font-size:15.6px;line-height:21px;color:#cccccc;letter-spacing:-0.6px">183.62.9.42</div>
<div class="a" style="left:1402px;top:110px;font-size:14.5px;line-height:20px;color:#cccccc">Aa</div>
<div class="a" style="left:1428px;top:109px;font-size:14.5px;line-height:20px;color:#cccccc">ab</div>
<svg style="left:1427px;top:126px" width="45" height="20" viewBox="0 0 45 20"><g stroke="#cccccc" stroke-width="1.3" fill="none" stroke-linecap="round"><path d="M0.8 0.3v0.8a1.6 1.6 0 0 0 1.6 1.6h16a1.6 1.6 0 0 0 1.6-1.6V0.3"/><path d="M37 -13.2v8.4M32.8 -9h8.4M34 -12l6 6M40 -12l-6 6" stroke-width="1.4"/></g><circle cx="31.6" cy="-0.7" r="1.5" fill="#cccccc"/></svg>
<div class="a" style="left:1483px;top:109px;font-size:14.5px;line-height:21px;color:#cccccc;white-space:pre">第 30 项，共 85 项</div>
<svg style="left:1651px;top:110px" width="112" height="18" viewBox="0 0 112 18">
 <g stroke="#cccccc" stroke-width="1.4" fill="none">
  <path d="M8 16V1.5M2 7.5l6-6 6 6"/>
  <path d="M38 1v14.5M32 9.5l6 6 6-6"/>
  <path d="M62 3h12M62 9h12M62 15h8"/>
  <path d="M92 3l11 11M103 3L92 14"/>
 </g>
</svg>

<!-- ===== STATUS BAR ===== -->
<div class="bd" style="left:1px;top:996px;width:1794px;height:1px"></div>
<svg style="left:10px;top:999px" width="18" height="14" viewBox="0 0 18 14"><path d="M2 4l5 5-5 5M16 2l-5 5 5 5" stroke="#cccccc" stroke-width="1.4" fill="none"/></svg>
<svg style="left:49px;top:1000px" width="70" height="14" viewBox="0 0 70 14"><g stroke="#cccccc" stroke-width="1.3" fill="none"><circle cx="8" cy="8.5" r="7.3"/><path d="M5 5.5l6 6M11 5.5l-6 6"/><path d="M43 1l7 12H36z"/></g></svg>
<div class="a" style="left:71px;top:1002px;font-size:14px;line-height:16px;color:#cccccc">0</div>
<div class="a" style="left:106px;top:1002px;font-size:14px;line-height:16px;color:#cccccc">0</div>
<div class="a" style="left:1385px;top:997px;width:38px;height:12px;background:#37393c"></div>
<svg style="left:1395px;top:999px" width="16" height="16" viewBox="0 0 16 16"><g stroke="#cccccc" stroke-width="1.3" fill="none"><circle cx="8" cy="8" r="6.5"/><path d="M8 4.5v7M4.5 8h7"/></g></svg>
<div class="a" style="left:1433px;top:1000.5px;font-size:14px;line-height:18px;color:#cccccc;white-space:pre">行 7715，列 51 (已选择9)</div>
<div class="a" style="left:1612px;top:1000.5px;font-size:14px;line-height:18px;color:#cccccc;white-space:pre">空格: 4</div>
<div class="a" style="left:1676px;top:1000.5px;font-size:14px;line-height:18px;color:#cccccc;white-space:pre">UTF-8</div>
<div class="a" style="left:1734px;top:1000.5px;font-size:14px;line-height:18px;color:#cccccc;white-space:pre">CRLF</div>
<div class="a" style="left:1786px;top:997px;font-size:14px;line-height:18px;color:#cccccc;white-space:pre">{</div>

<!-- ===== ANNOTATIONS ===== -->
<div class="rbox" style="left:435.4px;top:193.2px;width:57.4px;height:801.8px;border-width:3.6px"></div>
<div class="rbox" style="left:1477.5px;top:455px;width:88.5px;height:121px;border-width:3.2px"></div>
</body></html>
